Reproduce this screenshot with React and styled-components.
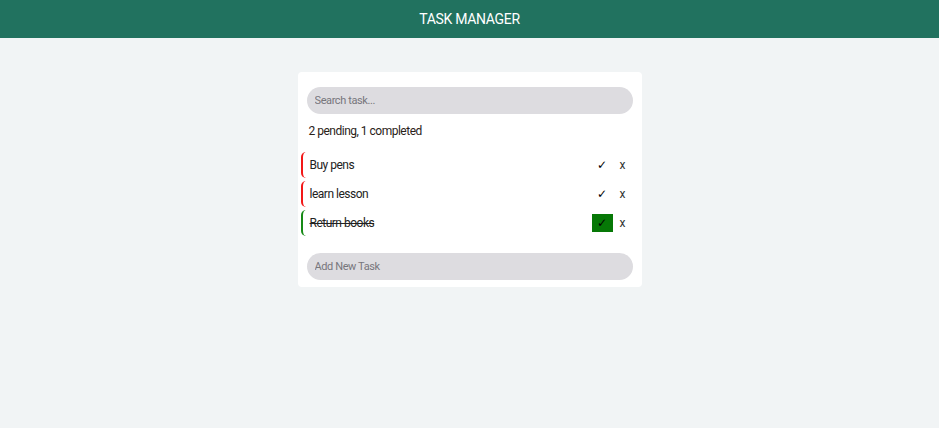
import React from "react";
import styled, { createGlobalStyle, css } from "styled-components";

const Global = createGlobalStyle`
  * { box-sizing: border-box; }
  html, body { margin: 0; padding: 0; background: #f1f4f5; font-family: Roboto, "Noto Sans", sans-serif; }
`;

const Header = styled.header`
  height: 38px;
  background: #21725f;
  color: #fff;
  display: flex;
  align-items: center;
  justify-content: center;
  font-size: 14px;
  letter-spacing: -0.3px;
`;

const Main = styled.main`
  display: flex;
  justify-content: center;
  padding-top: 34px;
`;

const Card = styled.section`
  width: 344px;
  background: #fff;
  border-radius: 4px;
  padding: 15px 8px 7px 9px;
  display: flex;
  flex-direction: column;
`;

const Pill = styled.input`
  width: 326px;
  height: 27px;
  border: none;
  outline: none;
  border-radius: 14px;
  background: #dddce0;
  padding: 0 8px;
  font-family: inherit;
  font-size: 11px;
  letter-spacing: -0.4px;
  color: #333;
  &::placeholder { color: #77767c; }
`;

const Status = styled.p`
  margin: 10px 0 13px 2px;
  font-size: 12px;
  letter-spacing: -0.5px;
  color: #2a2218;
  line-height: 15px;
`;

const List = styled.ul`
  list-style: none;
  margin: 0 0 17px -6px;
  padding: 0;
  display: flex;
  flex-direction: column;
  gap: 3px;
`;

const Row = styled.li`
  height: 26px;
  display: flex;
  align-items: center;
  border-left: 2px solid ${p => (p.$done ? "#168a16" : "#f21818")};
  border-radius: 5px;
  padding: 0 4px 0 7px;
  font-size: 12px;
  letter-spacing: -0.5px;
  color: #222;
`;

const Title = styled.span`
  flex: 1;
  ${p => p.$done && css`text-decoration: line-through;`}
`;

const CheckBtn = styled.button`
  width: 21px;
  height: 18px;
  border: none;
  padding: 0;
  margin-right: 5px;
  font-size: 12px;
  font-family: "DejaVu Sans", sans-serif;
  color: #000;
  background: ${p => (p.$done ? "#067806" : "transparent")};
  display: flex;
  align-items: center;
  justify-content: center;
`;

const DelBtn = styled.button`
  border: none;
  background: transparent;
  padding: 0;
  width: 10px;
  font-size: 12px;
  font-family: Roboto, sans-serif;
  color: #333;
  margin-right: 2px;
`;

const tasks = [
  { title: "Buy pens", done: false },
  { title: "learn lesson", done: false },
  { title: "Return books", done: true },
];

export default function App() {
  return (
    <>
      <Global />
      <Header>TASK MANAGER</Header>
      <Main>
        <Card>
          <Pill placeholder="Search task..." />
          <Status>2 pending, 1 completed</Status>
          <List>
            {tasks.map(t => (
              <Row key={t.title} $done={t.done}>
                <Title $done={t.done}>{t.title}</Title>
                <CheckBtn $done={t.done}>✓</CheckBtn>
                <DelBtn>x</DelBtn>
              </Row>
            ))}
          </List>
          <Pill placeholder="Add New Task" />
        </Card>
      </Main>
    </>
  );
}
